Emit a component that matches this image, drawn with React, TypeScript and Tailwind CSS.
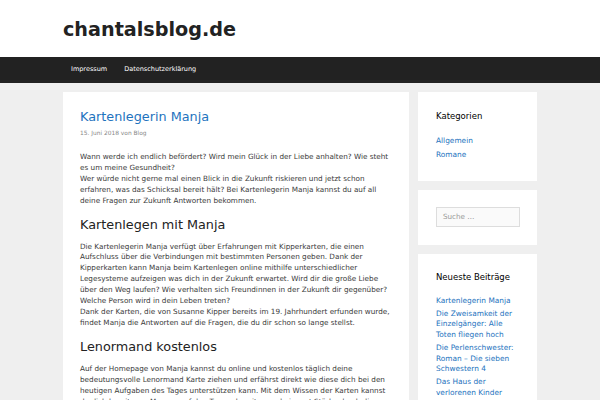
export default function App() {
  const font = { fontFamily: "'DejaVu Sans', sans-serif" };
  return (
    <div className="min-h-screen bg-[#efefef] text-[#3a3a3a]" style={font}>
      <header className="bg-white">
        <div className="mx-auto w-[474px] h-[57px] flex items-center">
          <h1 className="text-[19.2px] font-bold leading-none text-[#222222] mt-[2px]">chantalsblog.de</h1>
        </div>
      </header>
      <nav className="bg-[#222222] h-[26px]">
        <div className="mx-auto w-[474px] h-full flex items-center">
          <a className="px-[8px] text-[6.5px] text-[#ffffff]">Impressum</a>
          <a className="px-[8px] ml-[1px] text-[6.5px] text-[#ffffff]">Datenschutzerklärung</a>
        </div>
      </nav>
      <div className="mx-auto w-[474px] mt-[9px] flex gap-[9px] items-start">
        <main className="w-[346px] bg-white px-[17px] pt-[17px] pb-[20px]">
          <h2 className="text-[12.8px] leading-[16px] text-[#1e73be]">Kartenlegerin Manja</h2>
          <div className="mt-[3px] text-[5.9px] leading-[10px] text-[#878787]">
            15. Juni 2018 von Blog
          </div>
          <div className="mt-[14px] text-[7.25px] leading-[10.9px]">
            <p>
              Wann werde ich endlich befördert? Wird mein Glück in der Liebe anhalten? Wie steht es um meine Gesundheit?
              <br />
              Wer würde nicht gerne mal einen Blick in die Zukunft riskieren und jetzt schon erfahren, was das Schicksal bereit hält? Bei Kartenlegerin Manja kannst du auf all deine Fragen zur Zukunft Antworten bekommen.
            </p>
            <h3 className="mt-[10px] text-[12.8px] leading-[16px] text-[#222222]">Kartenlegen mit Manja</h3>
            <p className="mt-[9px]">
              Die Kartenlegerin Manja verfügt über Erfahrungen mit Kipperkarten, die einen Aufschluss über die Verbindungen mit bestimmten Personen geben. Dank der Kipperkarten kann Manja beim Kartenlegen online mithilfe unterschiedlicher Legesysteme aufzeigen was dich in der Zukunft erwartet. Wird dir die große Liebe über den Weg laufen? Wie verhalten sich Freundinnen in der Zukunft dir gegenüber? Welche Person wird in dein Leben treten?
              <br />
              Dank der Karten, die von Susanne Kipper bereits im 19. Jahrhundert erfunden wurde, findet Manja die Antworten auf die Fragen, die du dir schon so lange stellst.
            </p>
            <h3 className="mt-[10px] text-[12.8px] leading-[16px] text-[#222222]">Lenormand kostenlos</h3>
            <p className="mt-[9px]">
              Auf der Homepage von Manja kannst du online und kostenlos täglich deine bedeutungsvolle Lenormand Karte ziehen und erfährst direkt wie diese dich bei den heutigen Aufgaben des Tages unterstützen kann. Mit dem Wissen der Karten kannst du dich bereits am Morgen auf den Tag vorbereiten und nimmst Stärke durch die Ratschläge der Karten mit in deinen Alltag.
            </p>
          </div>
        </main>
        <aside className="w-[119px] flex flex-col gap-[9px]">
          <section className="bg-white px-[18px] pt-[18px] pb-[19px]">
            <h4 className="text-[8.5px] leading-[12px] text-[#000000]">Kategorien</h4>
            <ul className="mt-[12px] text-[7.4px] leading-[14px] text-[#1e73be]">
              <li>Allgemein</li>
              <li>Romane</li>
            </ul>
          </section>
          <section className="bg-white px-[18px] pt-[17px] pb-[18px]">
            <div className="w-[84px] h-[20px] border border-[#dddddd] bg-[#fafafa] flex items-center px-[6px] text-[7.2px] text-[#999999]">
              Suche …
            </div>
          </section>
          <section className="bg-white px-[18px] pt-[17px] pb-[19px]">
            <h4 className="text-[8.5px] leading-[12px] text-[#000000]">Neueste Beiträge</h4>
            <ul className="mt-[13px] flex flex-col gap-[2px] text-[7.4px] leading-[10.7px] text-[#1e73be]">
              <li>Kartenlegerin Manja</li>
              <li>Die Zweisamkeit der Einzelgänger: Alle Toten fliegen hoch</li>
              <li>Die Perlenschwester: Roman – Die sieben Schwestern 4</li>
              <li>Das Haus der verlorenen Kinder</li>
              <li>Die Mondschwester</li>
            </ul>
          </section>
        </aside>
      </div>
    </div>
  );
}
